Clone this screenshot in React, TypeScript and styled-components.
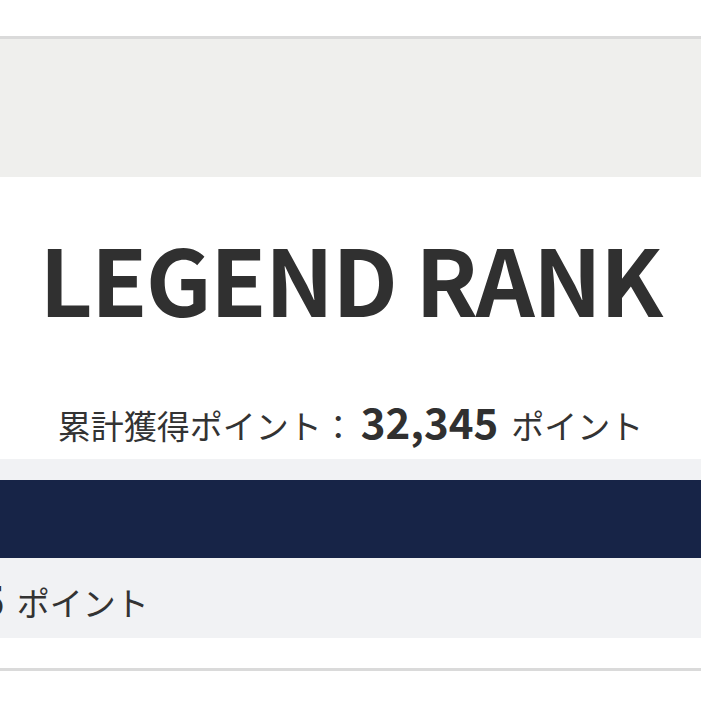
import React from "react";
import styled, { createGlobalStyle } from "styled-components";

const Global = createGlobalStyle`
  html, body { margin: 0; padding: 0; background: #ffffff; }
  body {
    font-family: "Noto Sans CJK JP", "Noto Sans", sans-serif;
    color: #333333;
    overflow: hidden;
  }
`;

const Page = styled.div`
  display: flex;
  flex-direction: column;
  width: 701px;
`;

const TopSpace = styled.div`
  height: 36px;
  background: #ffffff;
`;

const Banner = styled.div`
  height: 138px;
  border-top: 3px solid #dadada;
  background: #efefed;
`;

const RankCard = styled.section`
  box-sizing: border-box;
  height: 282px;
  padding-top: 54px;
  display: flex;
  flex-direction: column;
  align-items: center;
  background: #ffffff;
`;

const RankTitle = styled.h1`
  margin: 0;
  font-family: "Noto Sans CJK JP", sans-serif;
  font-weight: 700;
  font-size: 92px;
  line-height: 1;
  letter-spacing: -1.7px;
  color: #303030;
  white-space: nowrap;
`;

const PointsLine = styled.div<{ $align?: "center" | "start" }>`
  display: flex;
  align-items: baseline;
  justify-content: ${(p) => (p.$align === "start" ? "flex-start" : "center")};
  white-space: nowrap;
  line-height: 1;
`;

const TotalLine = styled(PointsLine)`
  margin-top: 77px;
`;

const Label = styled.span`
  font-size: 33px;
  font-weight: 400;
  color: #333333;
`;

const Value = styled.span`
  font-size: 42px;
  font-weight: 700;
  color: #303030;
  margin: 0 13px 0 6px;
`;

const Band = styled.div<{ $h: number; $bg: string }>`
  height: ${(p) => p.$h}px;
  background: ${(p) => p.$bg};
`;

const NextRow = styled.div`
  box-sizing: border-box;
  height: 80px;
  background: #f1f2f4;
  display: flex;
  align-items: center;
  overflow: hidden;
`;

const CutValue = styled(Value)`
  margin-left: -20px;
  margin-right: 12px;
`;

const Gap = styled.div`
  height: 30px;
  background: #ffffff;
`;

const Divider = styled.hr`
  margin: 0;
  border: 0;
  height: 3px;
  background: #dadada;
`;

const Bottom = styled.div`
  height: 40px;
  background: #ffffff;
`;

export default function App() {
  return (
    <>
      <Global />
      <Page>
        <TopSpace />
        <Banner />
        <RankCard>
          <RankTitle>LEGEND RANK</RankTitle>
          <TotalLine>
            <Label>累計獲得ポイント：</Label>
            <Value>32,345</Value>
            <Label>ポイント</Label>
          </TotalLine>
        </RankCard>
        <Band $h={21} $bg="#f1f2f4" />
        <Band $h={78} $bg="#172447" />
        <NextRow>
          <PointsLine $align="start">
            <CutValue>5</CutValue>
            <Label>ポイント</Label>
          </PointsLine>
        </NextRow>
        <Gap />
        <Divider />
        <Bottom />
      </Page>
    </>
  );
}
